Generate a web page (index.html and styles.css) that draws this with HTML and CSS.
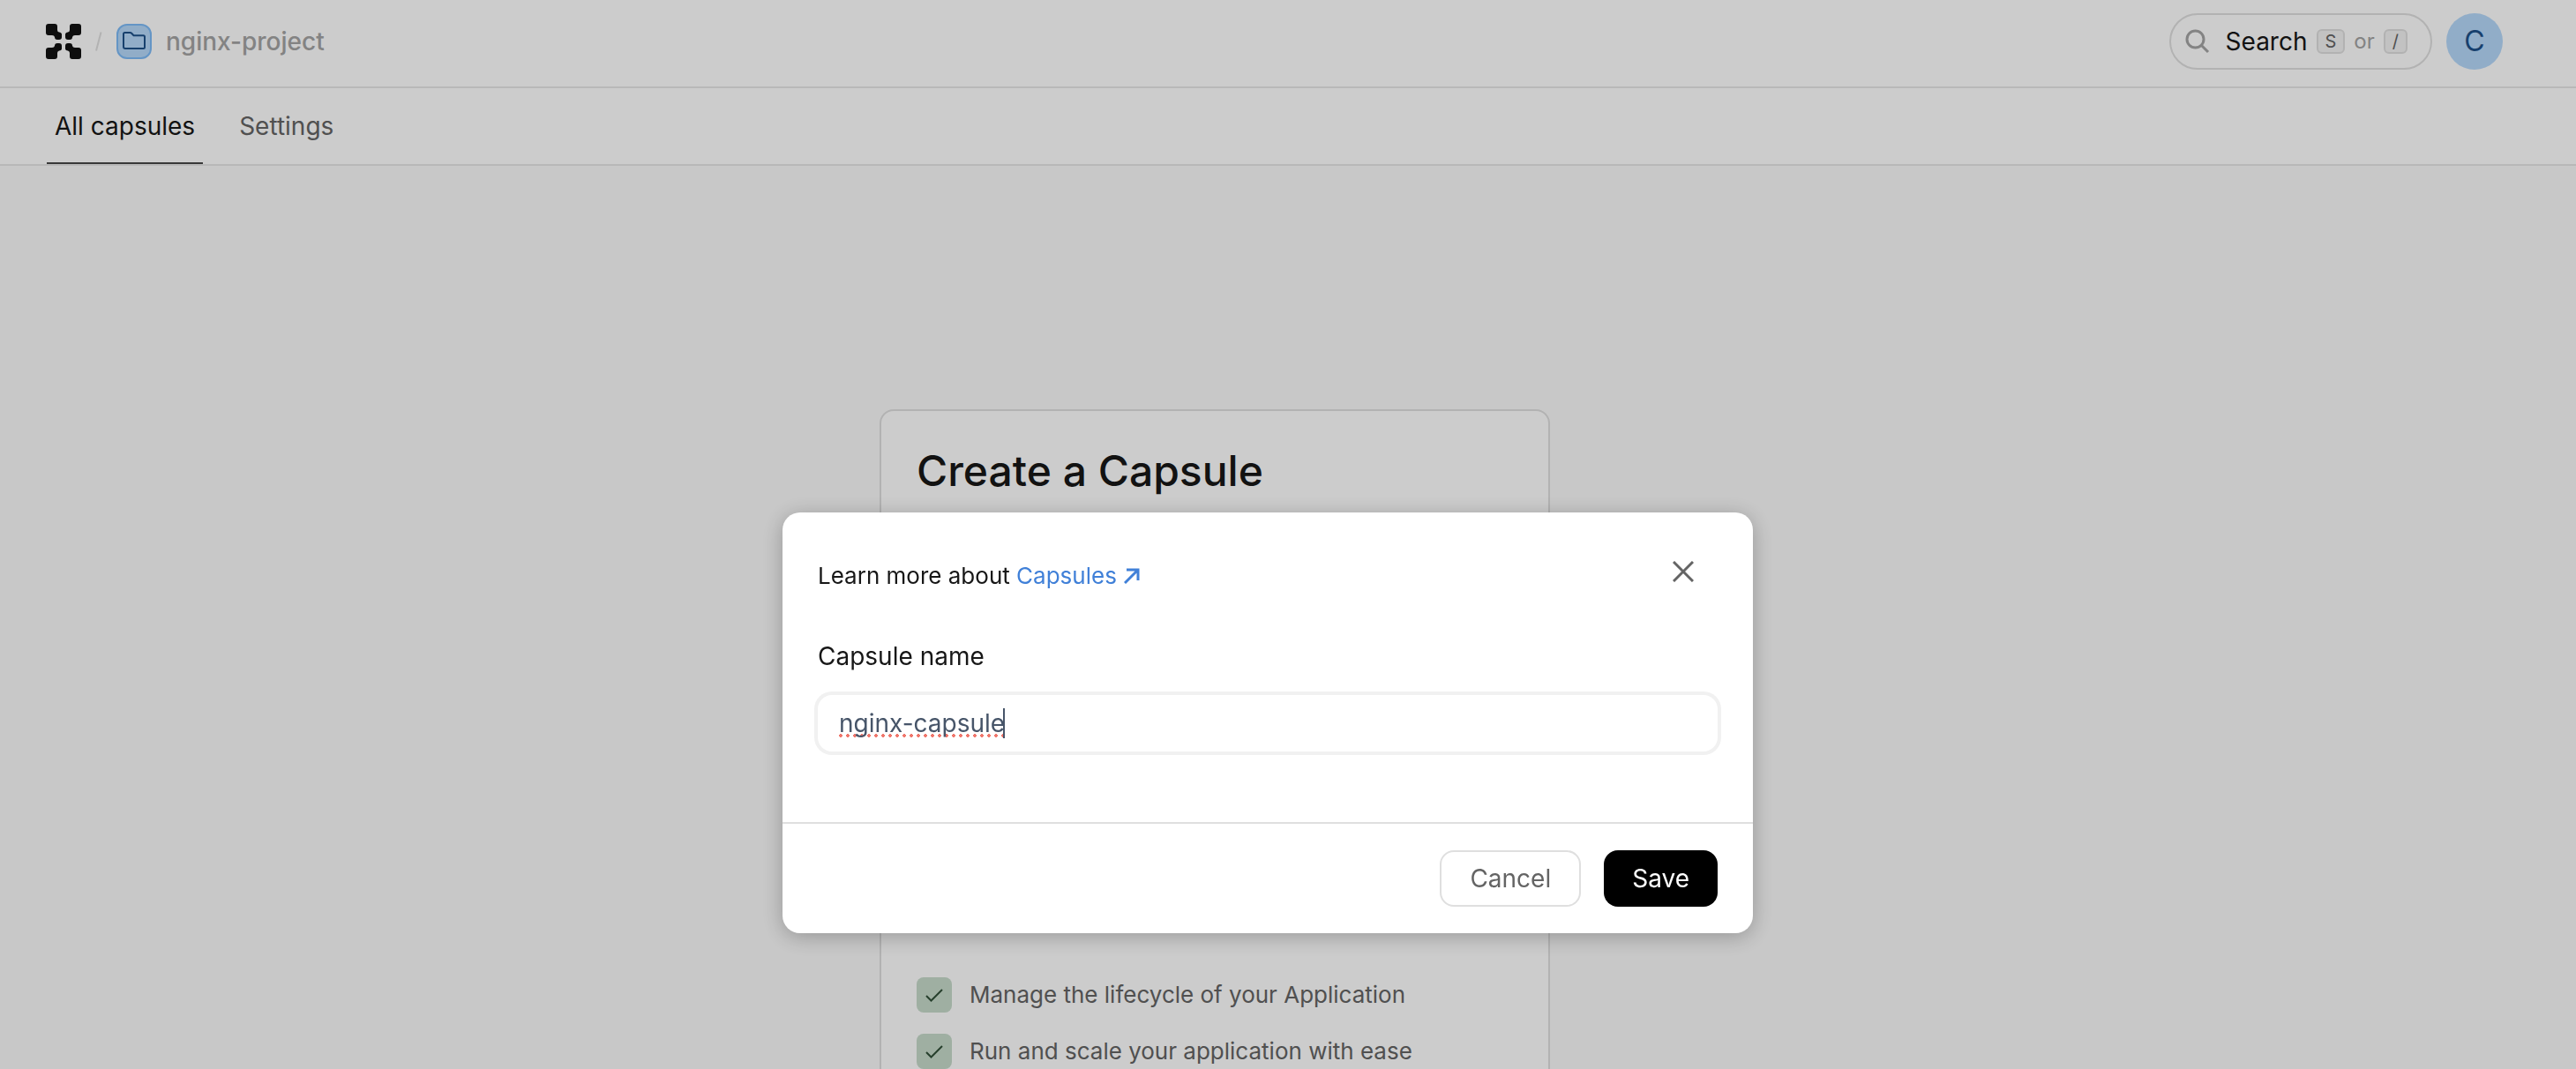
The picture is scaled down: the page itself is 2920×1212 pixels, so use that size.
FILE: index.html
```html
<!DOCTYPE html>
<html lang="en">
<head>
<meta charset="utf-8">
<meta name="viewport" content="width=device-width, initial-scale=1">
<title>nginx-project</title>
<link rel="stylesheet" href="styles.css">
</head>
<body>
<div class="page">
  <header class="topbar">
    <nav class="crumbs" aria-label="Breadcrumb">
      <a class="logo" href="#" aria-label="Home">
        <svg width="40" height="40" viewBox="0 0 40 40" aria-hidden="true">
          <defs>
            <path id="petal" d="M3 0H10Q13 0 13 3V7Q13 9 15 9.500Q18 10 18 12V15Q18 18 15 18H13Q10 18 10 15Q9.500 13 7 13H3Q0 13 0 10V3Q0 0 3 0Z"/>
          </defs>
          <use href="#petal"/>
          <use href="#petal" transform="translate(40 0) scale(-1 1)"/>
          <use href="#petal" transform="translate(0 40) scale(1 -1)"/>
          <use href="#petal" transform="translate(40 40) scale(-1 -1)"/>
        </svg>
      </a>
      <svg class="slash" width="8" height="22" viewBox="0 0 8 22" aria-hidden="true"><path d="M6.500 .5L1 21.500"/></svg>
      <span class="folder">
        <svg width="28" height="28" viewBox="0 0 28 28" aria-hidden="true"><path d="M2 19V5.500Q2 4 3.500 4H9.500Q10.500 4 11.200 4.700L13.500 7.200H24.500Q26 7.200 26 8.700V20.500Q26 22 24.500 22H4Q2 22 2 20Z"/></svg>
      </span>
      <a class="project" href="#">nginx-project</a>
    </nav>
    <div class="tools">
      <button class="search" type="button">
        <svg width="28" height="28" viewBox="0 0 28 28" aria-hidden="true"><circle cx="11.500" cy="11.500" r="9.500"/><path d="M18.500 18.500L26 26"/></svg>
        <span class="search-label">Search</span>
        <kbd>S</kbd>
        <span class="or">or</span>
        <kbd>/</kbd>
      </button>
      <button class="avatar" type="button">C</button>
    </div>
  </header>
  <nav class="tabs" aria-label="Project">
    <a class="tab tab-active" href="#">All capsules</a>
    <a class="tab" href="#">Settings</a>
  </nav>
  <main class="content">
    <section class="card">
      <h1>Create a Capsule</h1>
      <ul class="features">
        <li><span class="tick"><svg width="24" height="24" viewBox="0 0 24 24" aria-hidden="true"><path d="M3 13L8.500 18.500L21 6"/></svg></span>Manage the lifecycle of your Application</li>
        <li><span class="tick"><svg width="24" height="24" viewBox="0 0 24 24" aria-hidden="true"><path d="M3 13L8.500 18.500L21 6"/></svg></span>Run and scale your application with ease</li>
      </ul>
    </section>
  </main>
</div>
<div class="overlay">
  <form class="dialog" role="dialog" aria-modal="true" aria-label="Create a Capsule">
    <div class="dialog-body">
      <div class="dialog-head">
        <p>Learn more about <a href="#">Capsules<svg width="18" height="18" viewBox="0 0 18 18" aria-hidden="true"><path d="M1 17L16 2M3 2H16V14"/></svg></a></p>
        <button class="close" type="button" aria-label="Close">
          <svg width="24" height="24" viewBox="0 0 24 24" aria-hidden="true"><path d="M1 1L23 23M23 1L1 23"/></svg>
        </button>
      </div>
      <label for="capsule-name">Capsule name</label>
      <div class="field">
        <input id="capsule-name" type="text" value="nginx-capsule">
      </div>
    </div>
    <div class="dialog-foot">
      <button class="btn" type="button">Cancel</button>
      <button class="btn btn-primary" type="submit">Save</button>
    </div>
  </form>
</div>
</body>
</html>
```
FILE: styles.css
```css
* {
  box-sizing: border-box;
}

html,
body {
  height: 100%;
}

body {
  margin: 0;
  overflow: hidden;
  background: #fafafa;
  color: #171717;
  font: 400 28px/40px Inter, "Liberation Sans", sans-serif;
}

a {
  color: inherit;
  text-decoration: none;
}

button,
input,
kbd {
  font: inherit;
  color: inherit;
}

button {
  margin: 0;
  padding: 0;
  border: 0;
  background: none;
}

svg {
  display: block;
  flex: none;
  fill: none;
  stroke: currentColor;
  stroke-width: 2;
}

.page {
  height: 100%;
  overflow: hidden;
}

.topbar {
  display: flex;
  justify-content: space-between;
  align-items: center;
  padding: 15px 83px 19px 52px;
  border-bottom: 2px solid #e6e6e6;
  background: #fff;
}

.crumbs {
  display: flex;
  align-items: center;
  gap: 16px;
}

.logo svg {
  fill: #121212;
  stroke: none;
}

.slash {
  color: #dfdfdf;
}

.folder {
  display: grid;
  place-items: center;
  width: 40px;
  height: 40px;
  border: 2px solid #7ebbf7;
  border-radius: 12px;
  background: #b6d9fb;
  color: #1d5089;
}

.project {
  color: #a4a4a4;
  font-weight: 500;
}

.tools {
  display: flex;
  gap: 16px;
}

.search {
  display: flex;
  align-items: center;
  height: 64px;
  padding: 0 26px 0 16px;
  border: 2px solid #dfdfdf;
  border-radius: 32px;
  gap: 10px;
}

.search svg {
  margin-right: 8px;
  color: #a4a4a4;
  stroke-width: 3;
}

kbd {
  padding: 0 8px;
  border: 2px solid #dfdfdf;
  border-radius: 6px;
  background: #f3f3f3;
  color: #646464;
  font-size: 20px;
  line-height: 24px;
}

.or {
  color: #a4a4a4;
  font-size: 24px;
}

.avatar {
  width: 64px;
  height: 64px;
  border-radius: 50%;
  background: #b6d9fb;
  color: #1d5089;
  font-size: 32px;
}

.tabs {
  display: flex;
  gap: 32px;
  padding: 0 53px;
  border-bottom: 2px solid #e6e6e6;
  background: #fff;
}

.tab {
  padding: 23px 9px 21px;
  border-bottom: 2px solid transparent;
  color: #646464;
}

.tab-active {
  border-color: #484848;
  color: #171717;
}

.content {
  display: flex;
  justify-content: center;
  padding: 276px 166px 0 0;
}

.card {
  width: 100%;
  max-width: 760px;
  padding: 38px 40px;
  border: 2px solid #dfdfdf;
  border-radius: 16px;
  background: #fff;
}

h1 {
  margin: 0;
  font-size: 48px;
  font-weight: 500;
  line-height: 60px;
}

.features {
  display: grid;
  gap: 24px;
  margin: 0;
  padding: 544px 0 0;
  color: #646464;
  font-size: 26px;
  list-style: none;
}

.features li {
  display: flex;
  align-items: center;
  gap: 20px;
}

.tick {
  display: grid;
  place-items: center;
  width: 40px;
  height: 40px;
  border-radius: 8px;
  background: #c7dbcb;
  color: #315039;
}

.overlay {
  position: fixed;
  inset: 0;
  display: flex;
  justify-content: center;
  align-items: flex-start;
  padding: 581px 46px 0 0;
  background: rgba(0, 0, 0, 0.2);
}

.dialog {
  width: 100%;
  max-width: 1100px;
  border-radius: 20px;
  background: #fff;
  box-shadow: 0 4px 24px rgba(0, 0, 0, 0.25);
}

.dialog-body {
  padding: 40px 40px 80px;
}

.dialog-head {
  display: flex;
  justify-content: space-between;
  font-size: 26px;
}

.dialog-head p {
  margin: 12px 0 0;
}

.dialog-head a {
  display: inline-flex;
  align-items: center;
  gap: 8px;
  color: #4080d8;
}

.dialog-head svg {
  stroke-width: 3;
}

.close {
  display: grid;
  place-items: center;
  width: 54px;
  height: 54px;
  margin-right: 12px;
  color: #646464;
}

label {
  display: block;
  margin: 49px 0 24px;
}

.field {
  position: relative;
}

.field input {
  position: relative;
  z-index: 1;
  display: block;
  width: 100%;
  height: 64px;
  padding: 0 24px;
  border: 0;
  border-radius: 16px;
  outline: 0;
  background: none;
  box-shadow: 0 0 0 4px #f1f1f1;
  color: #475569;
}

/* Spelling mark and text caret, laid under the typed text. */
.field::before {
  content: "";
  position: absolute;
  top: 44px;
  left: 22px;
  width: 188px;
  height: 4px;
  background: radial-gradient(circle, #f0776c 2px, transparent 2px) 0 0 / 8px 4px repeat-x;
}

.field::after {
  content: "";
  position: absolute;
  top: 15px;
  left: 210px;
  width: 2px;
  height: 34px;
  background: #475569;
}

.dialog-foot {
  display: flex;
  justify-content: flex-end;
  gap: 26px;
  padding: 30px 40px;
  border-top: 2px solid #dfdfdf;
}

.btn {
  height: 64px;
  padding: 0 32px;
  border: 2px solid #dfdfdf;
  border-radius: 16px;
  color: #646464;
}

.btn-primary {
  border: 0;
  background: #000;
  color: #fff;
}
```
